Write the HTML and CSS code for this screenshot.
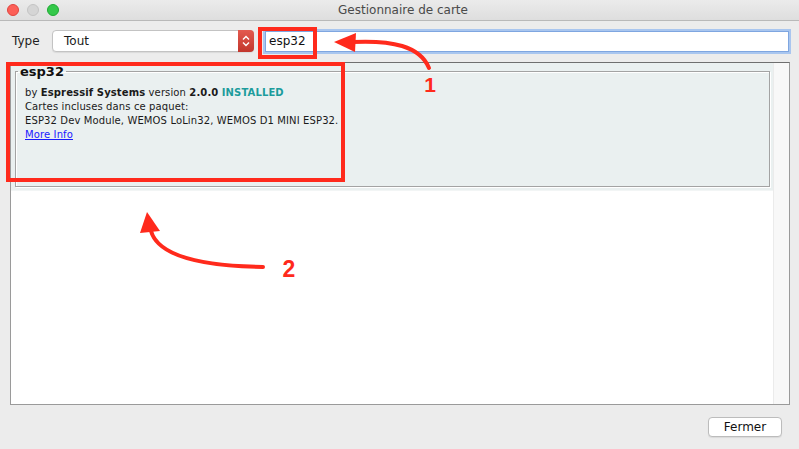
FILE: index.html
```html
<!DOCTYPE html>
<html lang="fr">
<head>
<meta charset="utf-8">
<title>Gestionnaire de carte</title>
<link rel="stylesheet" href="styles.css">
</head>
<body>
<div class="window">
  <div class="titlebar">
    <div class="lights">
      <span class="light close"></span>
      <span class="light min"></span>
      <span class="light max"></span>
    </div>
    <div class="title">Gestionnaire de carte</div>
  </div>
  <div class="toolbar">
    <span class="type-label">Type</span>
    <div class="select">
      <span class="select-value">Tout</span>
      <span class="stepper">
        <svg width="10" height="14" viewBox="0 0 10 14"><path d="M2 5.5 L5 2.5 L8 5.5 M2 8.5 L5 11.5 L8 8.5" fill="none" stroke="#fff" stroke-width="1.4"/></svg>
      </span>
    </div>
    <div class="search">esp32</div>
  </div>
  <div class="list">
    <div class="list-content">
      <div class="item">
        <fieldset class="card">
          <legend class="card-title">esp32</legend>
          <p class="line">by <b>Espressif Systems</b> version <b>2.0.0</b> <b class="installed">INSTALLED</b></p>
          <p class="line">Cartes incluses dans ce paquet:</p>
          <p class="line">ESP32 Dev Module, WEMOS LoLin32, WEMOS D1 MINI ESP32.</p>
          <p class="line"><a class="more" href="#">More Info</a></p>
        </fieldset>
      </div>
    </div>
    <div class="scrollbar"></div>
  </div>
  <div class="footer">
    <button class="btn">Fermer</button>
  </div>
  <svg class="annotations" width="799" height="449" viewBox="0 0 799 449">
    <rect x="260" y="29" width="55" height="28" fill="none" stroke="#ff2a1c" stroke-width="4"/>
    <rect x="8" y="64" width="335" height="116" fill="none" stroke="#ff2a1c" stroke-width="4"/>
    <path d="M429 68 C420 46 392 40 352 42" fill="none" stroke="#ff2a1c" stroke-width="4" stroke-linecap="round"/>
    <polygon points="334,42 356,33 355,52" fill="#ff2a1c"/>
    <text class="num" x="430" y="92" text-anchor="middle">1</text>
    <path d="M151 231 C158 256 200 266 263 267" fill="none" stroke="#ff2a1c" stroke-width="4" stroke-linecap="round"/>
    <polygon points="147,212 140,233 160,231" fill="#ff2a1c"/>
    <text class="num num2" x="289" y="277" text-anchor="middle">2</text>
  </svg>
</div>
</body>
</html>
```

FILE: styles.css
```css
html, body {
  margin: 0;
  padding: 0;
}
body {
  background: #ececec;
  font-family: "DejaVu Sans", "Liberation Sans", sans-serif;
}
.window {
  position: relative;
  width: 799px;
  height: 449px;
  display: flex;
  flex-direction: column;
  background: #ececec;
  overflow: hidden;
}
.titlebar {
  height: 20px;
  border-bottom: 1px solid #b9b9b9;
  background: linear-gradient(#ebebeb, #dedede);
  display: flex;
  align-items: center;
  position: relative;
  flex-shrink: 0;
}
.lights {
  display: flex;
  gap: 8px;
  padding-left: 7px;
}
.light {
  width: 12px;
  height: 12px;
  border-radius: 50%;
  box-sizing: border-box;
}
.close { background: #fc5f57; border: 1px solid #e0443e; }
.min { background: #d5d5d5; border: 1px solid #c4c4c4; }
.max { background: #34c84a; border: 1px solid #1eaa33; }
.title {
  flex: 1;
  text-align: center;
  font-size: 12px;
  color: #4a4a4a;
  margin-right: 52px;
}
.toolbar {
  display: flex;
  align-items: center;
  padding: 9px 10px 0 12px;
  height: 22px;
  flex-shrink: 0;
}
.type-label {
  font-size: 12px;
  color: #1e1e1e;
  width: 40px;
}
.select {
  width: 202px;
  height: 22px;
  box-sizing: border-box;
  background: #fff;
  border: 1px solid #c3c3c3;
  border-radius: 4px;
  display: flex;
  align-items: center;
  justify-content: space-between;
  box-shadow: 0 1px 1px rgba(0,0,0,0.08);
}
.select-value {
  font-size: 12px;
  color: #1a1a1a;
  padding-left: 11px;
}
.stepper {
  width: 16px;
  height: 22px;
  margin: -1px -1px -1px 0;
  border-radius: 0 4px 4px 0;
  background: linear-gradient(#e35a4f, #c2362c);
  display: flex;
  align-items: center;
  justify-content: center;
}
.search {
  margin-left: 11px;
  flex: 1;
  height: 21px;
  box-sizing: border-box;
  background: #fff;
  border: 1px solid #7fa6e0;
  box-shadow: 0 0 0 2px #a9c6ef;
  font-size: 12px;
  color: #111;
  padding: 2px 0 0 3px;
  line-height: 15px;
}
.list {
  margin: 10px 9px 0 10px;
  height: 343px;
  box-sizing: border-box;
  border: 1px solid #9a9a9a;
  border-top-color: #6f6f6f;
  background: #fff;
  display: flex;
  flex-shrink: 0;
}
.list-content {
  flex: 1;
}
.scrollbar {
  width: 15px;
  background: #f8f8f8;
  border-left: 1px solid #ebebeb;
}
.item {
  background: #eaf0f0;
  padding: 1px 3px 3px 4px;
  border-bottom: 1px solid #f2f5f5;
}
.card {
  margin: 0;
  height: 123px;
  box-sizing: border-box;
  border: 1px solid #a3a3a3;
  box-shadow: 1px 1px 0 #fff, inset 1px 1px 0 #fff;
  padding: 0 0 0 9px;
}
.card-title {
  font-size: 13px;
  font-weight: bold;
  color: #111;
  padding: 0 2px;
  margin-left: -7px;
  line-height: 15px;
}
.line {
  margin: 0;
  font-size: 10px;
  line-height: 14px;
  color: #1a1a1a;
  letter-spacing: 0.12px;
}
.line:first-of-type {
  margin-top: 7px;
}
.line b {
  font-weight: bold;
}
.installed {
  color: #1c9c9c;
}
.more {
  color: #1a1aff;
  text-decoration: underline;
}
.footer {
  display: flex;
  justify-content: flex-end;
  padding: 12px 17px 0 0;
}
.btn {
  width: 74px;
  height: 20px;
  background: #fff;
  border: 1px solid #bcbcbc;
  border-radius: 4px;
  font-family: "DejaVu Sans", "Liberation Sans", sans-serif;
  font-size: 12px;
  color: #111;
  padding: 0;
  box-shadow: 0 1px 1px rgba(0,0,0,0.08);
}
.annotations {
  position: absolute;
  left: 0;
  top: 0;
  pointer-events: none;
}
.num {
  font-family: "Liberation Sans", Arial, sans-serif;
  font-weight: bold;
  font-size: 21px;
  fill: #ff2a1c;
}
.num2 {
  font-size: 23px;
}
```
